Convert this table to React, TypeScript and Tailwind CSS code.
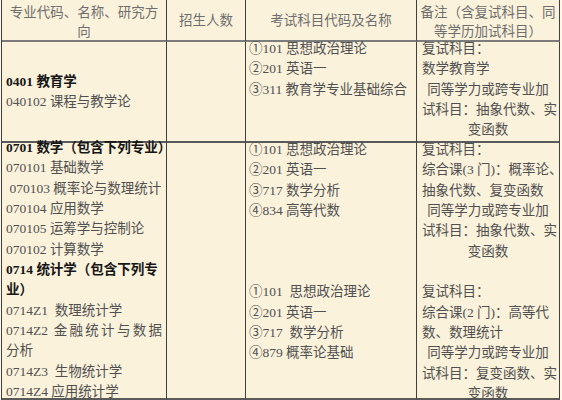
import React from "react";

const font = { fontFamily: '"Liberation Serif", "Noto Sans CJK SC", serif' };

type L = { t: string; c?: boolean; b?: boolean; j?: boolean };

function Lines({ lines }: { lines: L[] }) {
  return (
    <>
      {lines.map((l, i) => (
        <div
          key={i}
          className={
            "h-[20.33px] whitespace-pre leading-[20.33px] " +
            (l.c ? "text-center " : "") +
            (l.j ? "[text-align-last:justify] text-justify whitespace-normal " : "") +
            (l.b ? "font-bold text-[#161616]" : "")
          }
        >
          {l.t === "" ? "\u00a0" : l.t}
        </div>
      ))}
    </>
  );
}

export default function App() {
  const col1: L[] = [
    { t: "0701 数学（包含下列专业）", b: true },
    { t: "070101 基础数学" },
    { t: " 070103 概率论与数理统计" },
    { t: "070104 应用数学" },
    { t: "070105 运筹学与控制论" },
    { t: "070102 计算数学" },
    { t: "0714 统计学（包含下列专", b: true },
    { t: "业）", b: true },
    { t: "0714Z1  数理统计学" },
    { t: "0714Z2 金融统计与数据", j: true },
    { t: "分析" },
    { t: "0714Z3  生物统计学" },
    { t: "0714Z4 应用统计学" },
  ];
  const col3: L[] = [
    { t: "①101 思想政治理论" },
    { t: "②201 英语一" },
    { t: "③717 数学分析" },
    { t: "④834 高等代数" },
    { t: "" },
    { t: "" },
    { t: "" },
    { t: "①101  思想政治理论" },
    { t: "②201 英语一" },
    { t: "③717  数学分析" },
    { t: "④879 概率论基础" },
  ];
  const col4: L[] = [
    { t: "复试科目：" },
    { t: "综合课(3 门)：概率论、" },
    { t: "抽象代数、复变函数" },
    { t: "同等学力或跨专业加", c: true },
    { t: "试科目：抽象代数、实", c: true },
    { t: "变函数", c: true },
    { t: "" },
    { t: "复试科目：" },
    { t: "综合课(2 门)：高等代" },
    { t: "数、数理统计" },
    { t: "同等学力或跨专业加", c: true },
    { t: "试科目：复变函数、实", c: true },
    { t: "变函数", c: true },
  ];

  const hb = "border-r border-b-2 border-r-[#3f3f3f] border-b-[#7c7c7c]";
  const bb = "border-r border-b-2 border-r-[#3f3f3f] border-b-[#5a5a5a]";

  return (
    <div className="h-[400px] w-[562px] bg-[#fdf8ea]" style={font}>
      <div className="ml-px grid w-[559px] grid-cols-[165px_79px_171px_143px] border-l border-[#3f3f3f] bg-[#fbf2dc] text-[13.5px] text-[#505050]">
        {/* header */}
        <div className={"flex h-[42px] flex-col items-center justify-center pt-[3px] text-center leading-[19px] text-[#6e6e6e] " + hb}>
          <div>专业代码、名称、研究方</div>
          <div>向</div>
        </div>
        <div className={"flex h-[42px] items-center justify-center pt-[2px] text-[#6e6e6e] " + hb}>招生人数</div>
        <div className={"flex h-[42px] items-center justify-center pt-[2px] text-[#6e6e6e] " + hb}>考试科目代码及名称</div>
        <div className={"flex h-[42px] flex-col items-center justify-center pt-[3px] text-center leading-[19px] text-[#6e6e6e] " + hb}>
          <div>备注（含复试科目、同</div>
          <div>等学历加试科目）</div>
        </div>

        {/* row 1 */}
        <div className={"flex h-[101px] flex-col justify-center pl-[4px] pt-[1px] " + bb}>
          <Lines lines={[{ t: "0401 教育学", b: true }, { t: "040102 课程与教学论" }]} />
        </div>
        <div className={"h-[101px] " + bb} />
        <div className={"h-[101px] pl-[3px] " + bb}>
          <div className="-mt-[3px]">
            <Lines lines={[{ t: "①101 思想政治理论" }, { t: "②201 英语一" }, { t: "③311 教育学专业基础综合" }]} />
          </div>
        </div>
        <div className={"h-[101px] px-[5px] " + bb}>
          <div className="-mt-[3px]">
            <Lines
              lines={[
                { t: "复试科目：" },
                { t: "数学教育学" },
                { t: "同等学力或跨专业加", c: true },
                { t: "试科目：抽象代数、实", c: true },
                { t: "变函数", c: true },
              ]}
            />
          </div>
        </div>

        {/* row 2 */}
        <div className={"h-[257px] pl-[4px] pr-[4px] " + bb}>
          <div className="-mt-[5px]">
            <Lines lines={col1} />
          </div>
        </div>
        <div className={"h-[257px] " + bb} />
        <div className={"h-[257px] pl-[3px] " + bb}>
          <div className="-mt-[3px]">
            <Lines lines={col3} />
          </div>
        </div>
        <div className={"h-[257px] px-[5px] " + bb}>
          <div className="-mt-[3px]">
            <Lines lines={col4} />
          </div>
        </div>
      </div>
    </div>
  );
}
